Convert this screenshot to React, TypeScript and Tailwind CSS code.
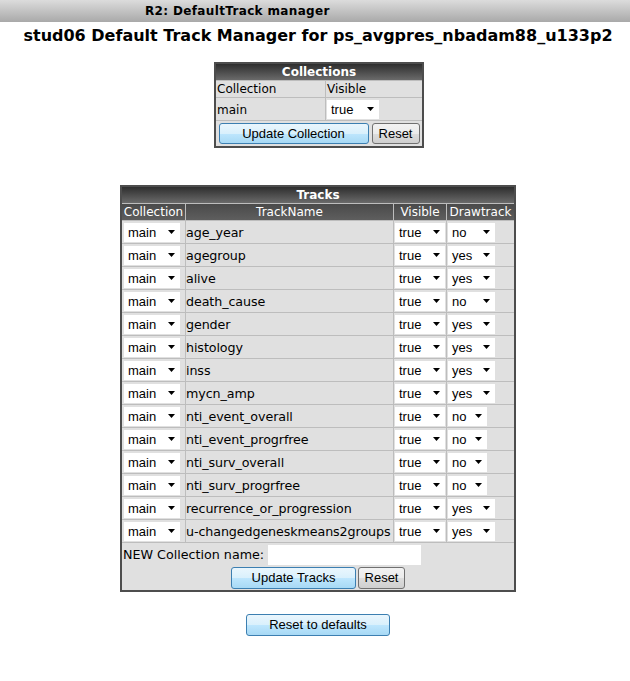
import React from "react";

const dark = "bg-[linear-gradient(to_bottom,#2e2e2e,#6a6a6a)]";

function Sel({ value, w }: { value: string; w: number }) {
  return (
    <div
      className="relative h-[19px] bg-white font-['Liberation_Sans',Arial,sans-serif] text-[13px] leading-[19px] pl-[4px] text-black"
      style={{ width: w }}
    >
      {value}
      <svg className="absolute right-[5px] top-[7px]" width="7" height="4" viewBox="0 0 7 4">
        <polygon points="0,0 7,0 3.5,4" fill="#000" />
      </svg>
    </div>
  );
}

function Btn({ label, w, blue, h = 21 }: { label: string; w: number; blue?: boolean; h?: number }) {
  return (
    <div
      className={
        "rounded-[3px] border text-center font-['Liberation_Sans',Arial,sans-serif] text-[13px] text-black flex items-center justify-center " +
        (blue
          ? "border-[#3c7fb1] bg-[linear-gradient(to_bottom,#eaf6fd_0%,#d9f0fc_50%,#bee6fd_51%,#a7d9f5_100%)]"
          : "border-[#707070] bg-[linear-gradient(to_bottom,#f2f2f2_0%,#ebebeb_50%,#dddddd_51%,#cfcfcf_100%)]")
      }
      style={{ width: w, height: h }}
    >
      {label}
    </div>
  );
}

const rows: [string, string, number][] = [
  ["age_year", "no", 47],
  ["agegroup", "yes", 47],
  ["alive", "yes", 47],
  ["death_cause", "no", 47],
  ["gender", "yes", 47],
  ["histology", "yes", 47],
  ["inss", "yes", 47],
  ["mycn_amp", "yes", 47],
  ["nti_event_overall", "no", 39],
  ["nti_event_progrfree", "no", 39],
  ["nti_surv_overall", "no", 39],
  ["nti_surv_progrfree", "no", 39],
  ["recurrence_or_progression", "yes", 47],
  ["u-changedgeneskmeans2groups", "yes", 47],
];

export default function App() {
  return (
    <div className="w-[630px] min-h-[681px] bg-white text-black font-['DejaVu_Sans',Verdana,sans-serif]">
      <div className="h-[22px] bg-[linear-gradient(to_bottom,#dcdcdc,#a9a9a9)] pl-[145px] text-[12px] font-bold leading-[22px] tracking-[0.35px]">
        R2: DefaultTrack manager
      </div>
      <h1 className="mt-[2px] pl-[6px] text-center text-[16px] font-bold leading-[24px]">
        stud06 Default Track Manager for ps_avgpres_nbadam88_u133p2
      </h1>

      <div className="mt-[14px] flex justify-center pl-[8px]">
        <div className="w-[210px] border-2 border-[#4d4d4d] bg-[#bdbdbd]">
          <div className={`${dark} h-[16px] text-center text-[12px] font-bold leading-[16px] text-white`}>Collections</div>
          <div className="grid grid-cols-[109px_96px] gap-px pt-px text-[12px]">
            <div className="h-[16px] bg-[#e0e0e0] pl-[1px] leading-[16px]">Collection</div>
            <div className="h-[16px] bg-[#e0e0e0] pl-[1px] leading-[16px]">Visible</div>
            <div className="flex h-[22px] items-center bg-[#e0e0e0] pl-[1px] pt-[1px]">main</div>
            <div className="flex h-[22px] items-center bg-[#e0e0e0] pl-[1px]">
              <Sel value="true" w={52} />
            </div>
            <div className="col-span-2 flex h-[25px] items-center justify-center gap-[3px] bg-[#e0e0e0]">
              <Btn label="Update Collection" w={150} blue />
              <Btn label="Reset" w={48} />
            </div>
          </div>
        </div>
      </div>

      <div className="mt-[37px] flex justify-center pl-[6px]">
        <div className="w-[396px] border-2 border-[#4d4d4d] bg-[#bdbdbd]">
          <div className="grid grid-cols-[63px_207px_52px_67px] gap-px">
            <div className={`${dark} col-span-4 h-[16px] text-center text-[12px] font-bold leading-[16px] text-white`}>
              Tracks
            </div>
            {["Collection", "TrackName", "Visible", "Drawtrack"].map((h) => (
              <div
                key={h}
                className="h-[16px] whitespace-nowrap bg-[linear-gradient(to_bottom,#4a4a4a,#5e5e5e)] text-center text-[12px] leading-[16px] text-white"
              >
                {h}
              </div>
            ))}
            {rows.map(([name, dt, dw]) => (
              <React.Fragment key={name}>
                <div className="flex h-[22px] items-center bg-[#e0e0e0] pl-[2px]">
                  <Sel value="main" w={56} />
                </div>
                <div className="flex h-[22px] items-center whitespace-nowrap bg-[#e0e0e0] pt-[1px] text-[12.7px] tracking-[-0.1px]">
                  {name}
                </div>
                <div className="flex h-[22px] items-center bg-[#e0e0e0] pl-[1px]">
                  <Sel value="true" w={50} />
                </div>
                <div className="flex h-[22px] items-center bg-[#e0e0e0] pl-[1px]">
                  <Sel value={dt} w={dw} />
                </div>
              </React.Fragment>
            ))}
            <div className="col-span-4 bg-[#e0e0e0]">
              <div className="flex h-[23px] items-center gap-[4px] pl-[1px] text-[12.7px]">
                NEW Collection name:
                <div className="h-[20px] w-[153px] bg-white" />
              </div>
              <div className="flex h-[24px] items-center justify-center gap-[2px]">
                <Btn label="Update Tracks" w={125} blue h={22} />
                <Btn label="Reset" w={47} h={22} />
              </div>
            </div>
          </div>
        </div>
      </div>

      <div className="mt-[22px] flex justify-center pl-[6px]">
        <Btn label="Reset to defaults" w={144} blue h={22} />
      </div>
    </div>
  );
}
